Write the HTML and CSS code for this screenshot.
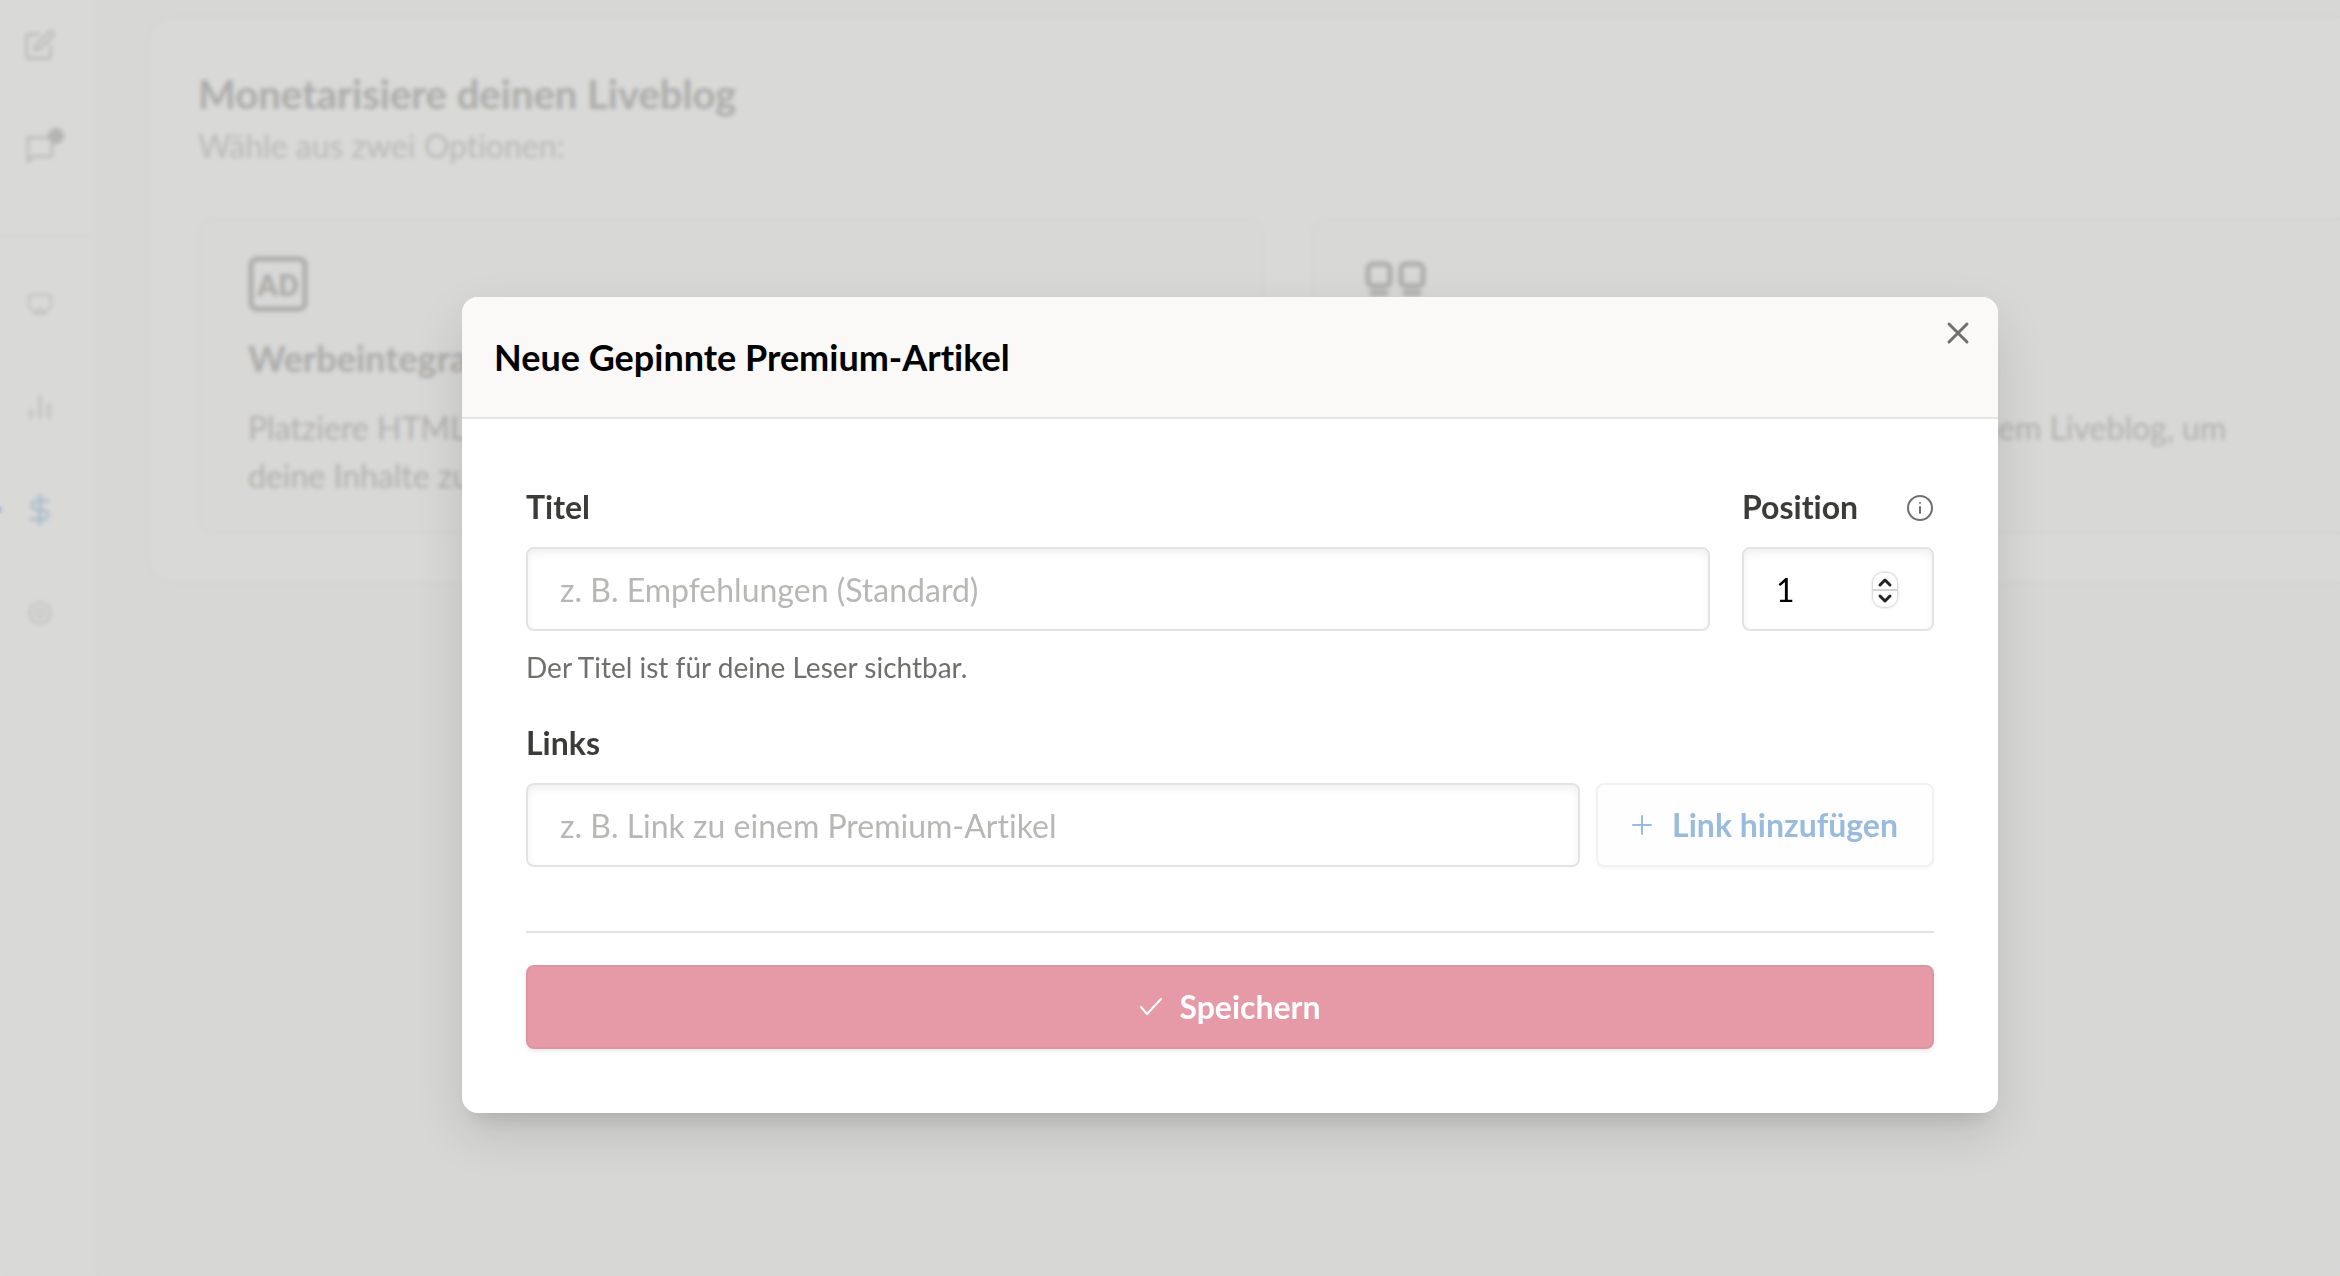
FILE: index.html
```html
<!DOCTYPE html>
<html lang="de">
  <head>
    <meta charset="UTF-8" />
    <meta name="viewport" content="width=device-width, initial-scale=1.0" />
    <title>Monetarisierung</title>
    <link rel="stylesheet" href="styles.css">
  </head>
  <body>
    <div class="app">
      <!-- Sidebar -->
      <nav class="sidebar">
        <a href="#" class="menu-item" aria-label="Beiträge">
          <svg class="icon icon-lg" viewBox="0 0 24 24"><path d="M11 4H4a2 2 0 0 0-2 2v14a2 2 0 0 0 2 2h14a2 2 0 0 0 2-2v-7" /><path d="M18.500 2.500a2.100 2.100 0 0 1 3 3L12 15l-4 1 1-4z" /></svg>
        </a>
        <a href="#" class="menu-item comments" aria-label="Kommentare">
          <svg class="icon icon-lg" viewBox="0 0 24 24"><path d="M21 19H7l-4 4V5h18z" /></svg>
          <span class="badge"></span>
        </a>
        <hr class="sidebar-line">
        <a href="#" class="menu-item" aria-label="Einbetten">
          <svg class="icon light" viewBox="0 0 24 24"><path d="M7 19H5l-4-4V3h22v12l-4 4h-2" /><path d="M12 16l5 6H7z" /></svg>
        </a>
        <a href="#" class="menu-item" aria-label="Statistik">
          <svg class="icon light" viewBox="0 0 24 24"><path d="M3 23v-8M12 23V1M21 23V9" stroke-width="3" /></svg>
        </a>
        <a href="#" class="menu-item active" aria-label="Monetarisierung">
          <svg class="icon icon-lg" viewBox="0 0 24 24"><path d="M12 1v22M18 5H9.500a3.500 3.500 0 0 0 0 7h5a3.500 3.500 0 0 1 0 7H5" /></svg>
        </a>
        <a href="#" class="menu-item" aria-label="Einstellungen">
          <svg class="icon light" viewBox="0 0 24 24"><path d="M12 1l3 2 5 1 1 4 2 4-2 4-1 4-5 1-3 2-3-2-5-1-1-4-2-4 2-4 1-4 5-1z" /><circle cx="12" cy="12" r="4" /></svg>
        </a>
      </nav>

      <!-- Main content -->
      <main class="main-content">
        <section class="panel">
          <h1>Monetarisiere deinen Liveblog</h1>
          <p class="subtitle">Wähle aus zwei Optionen:</p>
          <div class="options">
            <article class="option">
              <svg class="option-icon" viewBox="0 0 60 56"><rect x="3" y="3" width="54" height="50" rx="6" /><text x="30" y="40" text-anchor="middle">AD</text></svg>
              <h2>Werbeintegration</h2>
              <p>Platziere HTML-Anzeigen in deinem Liveblog, um<br>deine Inhalte zu monetarisieren.</p>
            </article>
            <article class="option">
              <svg class="option-icon" viewBox="0 0 60 56"><rect x="6" y="8" width="22" height="22" rx="5" /><rect x="39" y="8" width="22" height="22" rx="5" /><path d="M10 37h14M43 37h14" /></svg>
              <h2>Gepinnte Premium-Artikel</h2>
              <p>Verlinke ausgewählte Premium-Artikel in deinem Liveblog, um<br>mehr Abonnenten zu gewinnen.</p>
            </article>
          </div>
        </section>
      </main>

      <!-- Dialog -->
      <div class="overlay">
        <div class="modal" role="dialog" aria-modal="true" aria-labelledby="modal-title">
          <header class="modal-header">
            <h2 id="modal-title">Neue Gepinnte Premium-Artikel</h2>
            <button type="button" class="close-button" aria-label="Schließen">
              <svg viewBox="0 0 24 24"><path d="M3 3l18 18M21 3L3 21" /></svg>
            </button>
          </header>
          <form class="modal-body">
            <div class="row">
              <div class="field grow">
                <label for="title">Titel</label>
                <input type="text" id="title" placeholder="z. B. Empfehlungen (Standard)">
                <p class="hint">Der Titel ist für deine Leser sichtbar.</p>
              </div>
              <div class="field position">
                <div class="label-row">
                  <label for="position">Position</label>
                  <svg class="info" viewBox="0 0 28 28"><circle cx="14" cy="15" r="12" /><path d="M14 14v6M14 10v0" /></svg>
                </div>
                <div class="number">
                  <input type="number" id="position" value="1" min="1">
                  <span class="stepper">
                    <button type="button" id="step-up" aria-label="Erhöhen"><svg viewBox="0 0 24 16"><path d="M7 12l5-5 5 5" /></svg></button>
                    <button type="button" id="step-down" aria-label="Verringern"><svg viewBox="0 0 24 16"><path d="M7 5l5 5 5-5" /></svg></button>
                  </span>
                </div>
              </div>
            </div>
            <div class="field">
              <label for="link">Links</label>
              <div class="link-row">
                <input type="text" id="link" placeholder="z. B. Link zu einem Premium-Artikel">
                <button type="button" class="add-button" disabled>
                  <svg viewBox="0 0 20 20"><path d="M10 1v18M1 10h18" /></svg>
                  Link hinzufügen
                </button>
              </div>
            </div>
            <div class="modal-footer">
              <button type="submit" class="save-button" disabled>
                <svg viewBox="0 0 24 20"><path d="M2 10l6 7L22 2" /></svg>
                Speichern
              </button>
            </div>
          </form>
        </div>
      </div>
    </div>

    <script>
      const position = document.getElementById("position");

      document.getElementById("step-up").addEventListener("click", () => position.stepUp());
      document.getElementById("step-down").addEventListener("click", () => position.stepDown());
    </script>
  </body>
</html>
```
FILE: styles.css
```css
* {
  box-sizing: border-box;
}

html,
body {
  height: 100%;
}

body {
  margin: 0;
  overflow: hidden;
  font-family: Lato, sans-serif;
  font-size: 32px;
  line-height: 48px;
  font-variant-ligatures: none;
  background-color: #d7d7d5;
}

h1,
h2,
p {
  margin: 0;
}

svg {
  fill: none;
  stroke: currentColor;
  stroke-width: 2;
  stroke-linecap: round;
  stroke-linejoin: round;
  flex-shrink: 0;
}

button,
input {
  font: inherit;
  font-variant-ligatures: none;
}

/* The app is a little larger than the window */
.app {
  position: relative;
  display: flex;
  width: calc(100% + 120px);
  height: calc(100% + 134px);
}

/* Sidebar styles */
.sidebar {
  width: 100px;
  display: flex;
  flex-direction: column;
  background-color: #d9d9d7;
  border-right: 4px solid #d6d6d4;
}

.menu-item {
  position: relative;
  height: 103px;
  padding-right: 16px;
  display: flex;
  align-items: center;
  justify-content: center;
  color: #bababa;
}

.menu-item:first-child {
  height: 90px;
}

.menu-item.comments {
  height: 114px;
}

.menu-item.active {
  color: #a6b9cb;
}

.menu-item.active::before {
  content: "";
  position: absolute;
  left: -6px;
  width: 8px;
  height: 8px;
  border-radius: 50%;
  background-color: #a6b9cb;
}

.icon {
  width: 24px;
  height: 24px;
}

.icon-lg {
  width: 32px;
  height: 32px;
}

.light {
  color: #bfbfbd;
}

.badge {
  position: absolute;
  top: 38px;
  right: 32px;
  width: 16px;
  height: 16px;
  border-radius: 50%;
  background-color: #b5b5b3;
}

.sidebar-line {
  width: 100%;
  margin: 30px 0 14px;
  border: 0;
  border-top: 4px solid #d6d6d4;
}

/* Main content styles */
.main-content {
  flex: 1;
  padding: 16px 32px 16px 48px;
}

.panel {
  padding: 48px;
  background-color: #d9d9d7;
  border: 2px solid #d4d4d2;
  border-radius: 24px;
}

.panel h1 {
  font-size: 40px;
  line-height: 56px;
  color: #acacaa;
}

.subtitle {
  color: #bababa;
}

.options {
  display: flex;
  gap: 48px;
  margin-top: 48px;
}

.option {
  flex: 1;
  padding: 36px 48px 32px;
  background-color: #d8d8d6;
  border: 2px solid #d4d4d2;
  border-radius: 16px;
  color: #b1b1af;
}

.option h2 {
  margin: 22px 0;
  font-size: 36px;
  line-height: 48px;
  color: #acacaa;
}

.option-icon {
  display: block;
  width: 60px;
  height: 56px;
  overflow: visible;
  color: #acacaa;
  stroke-width: 5;
}

.option-icon text {
  font-family: Roboto, sans-serif;
  font-size: 32px;
  font-weight: bold;
  fill: currentColor;
  stroke: none;
}

/* Dialog styles */
.overlay {
  position: absolute;
  inset: 0;
  display: flex;
  align-items: center;
  justify-content: center;
  backdrop-filter: blur(2px);
}

.modal {
  width: 1536px;
  max-width: 90%;
  overflow: hidden;
  background-color: white;
  border-radius: 16px;
  box-shadow: 0 20px 50px rgba(0, 0, 0, 0.12), 0 16px 20px -12px rgba(0, 0, 0, 0.12);
}

.modal-header {
  display: flex;
  align-items: flex-start;
  justify-content: space-between;
  padding: 0 24px 0 32px;
  background-color: #faf9f7;
  border-bottom: 2px solid #e5e5e3;
}

.modal-header h2 {
  padding: 32px 0;
  font-size: 36px;
  line-height: 56px;
  color: black;
}

.close-button {
  display: flex;
  margin-top: 20px;
  padding: 4px;
  border: none;
  background: none;
  color: #6f6f6d;
  cursor: pointer;
}

.close-button svg {
  width: 24px;
  height: 24px;
  stroke-width: 3;
}

.modal-body {
  display: flex;
  flex-direction: column;
  gap: 32px;
  padding: 64px;
}

.row {
  display: flex;
  gap: 32px;
}

.grow {
  flex: 1;
}

.position {
  width: 192px;
}

.field label {
  display: block;
  font-weight: bold;
  color: #3b3b39;
}

.label-row {
  display: flex;
  align-items: center;
  justify-content: space-between;
}

.info {
  width: 28px;
  height: 28px;
  color: #6f6f6d;
}

.field input {
  width: 100%;
  height: 84px;
  margin: 0;
  padding: 0 32px;
  border: 2px solid #e3e3e2;
  border-radius: 8px;
  background-color: white;
  box-shadow: inset 0 4px 8px rgba(0, 0, 0, 0.06);
  color: black;
}

.field > input,
.number,
.link-row {
  margin-top: 16px;
}

.field input::placeholder {
  color: #b7b7b5;
}

.hint {
  margin-top: 16px;
  font-size: 28px;
  line-height: 40px;
  color: #6f6f6d;
}

/* Number field with its own stepper */
.number {
  position: relative;
}

.number input {
  display: block;
  appearance: textfield;
}

.number input::-webkit-inner-spin-button {
  display: none;
}

.stepper {
  position: absolute;
  top: 26px;
  right: 37px;
  width: 24px;
  border-radius: 10px;
  overflow: hidden;
  box-shadow: 0 0 3px rgba(0, 0, 0, 0.4);
}

.stepper button {
  display: block;
  width: 100%;
  height: 16px;
  padding: 0;
  border: none;
  background-color: white;
  color: #222;
}

.stepper button + button {
  height: 18px;
  border-top: 2px solid #d4d4d4;
}

.stepper svg {
  display: block;
  width: 24px;
  height: 16px;
  stroke-width: 3;
}

.link-row {
  display: flex;
  gap: 16px;
}

.link-row input {
  flex: 1;
  min-width: 0;
}

.add-button,
.save-button {
  display: flex;
  align-items: center;
  justify-content: center;
  gap: 16px;
  height: 84px;
  padding: 0 34px;
  border-radius: 8px;
  font-weight: bold;
}

.add-button {
  gap: 20px;
  border: 2px solid #f1f1f0;
  background-color: #fefefe;
  box-shadow: 0 2px 4px rgba(0, 0, 0, 0.03);
  color: #99bbdd;
}

.add-button svg {
  width: 20px;
  height: 20px;
}

.modal-footer {
  margin-top: 32px;
  padding-top: 32px;
  border-top: 2px solid #e3e3e2;
}

.save-button {
  width: 100%;
  border: 2px solid #dd95a2;
  background-color: #e69aa7;
  box-shadow: 0 2px 4px rgba(0, 0, 0, 0.1);
  color: white;
}

.save-button svg {
  width: 24px;
  height: 20px;
}
```
